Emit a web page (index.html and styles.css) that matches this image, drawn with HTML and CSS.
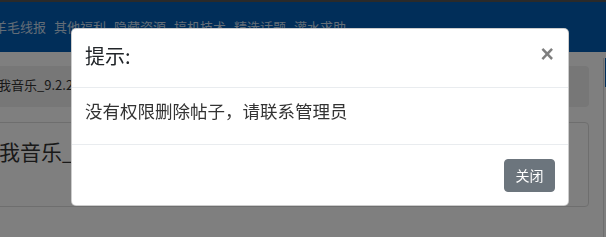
FILE: index.html
```html
<!DOCTYPE html>
<html lang="zh-CN">
<head>
  <meta charset="UTF-8">
  <meta name="viewport" content="width=device-width, initial-scale=1.0">
  <title>提示</title>
  <link rel="stylesheet" href="styles.css">
</head>
<body>
  <div class="topline"></div>
  <nav class="navbar">
    <a href="#">羊毛线报</a>
    <a href="#">其他福利</a>
    <a href="#">隐藏资源</a>
    <a href="#">搞机技术</a>
    <a href="#">精选话题</a>
    <a href="#">灌水求助</a>
  </nav>

  <div class="container">
    <div class="main">
      <div class="breadcrumb">我音乐_9.2.2</div>
      <div class="card">
        <h2 class="card-title">我音乐_9.2.2</h2>
      </div>
    </div>
    <div class="side">
      <div class="side-head"></div>
    </div>
  </div>

  <div class="backdrop"></div>
  <div class="modal">
    <div class="modal-header">
      <h5 class="modal-title">提示:</h5>
      <button class="close">×</button>
    </div>
    <div class="modal-body">没有权限删除帖子，请联系管理员</div>
    <div class="modal-footer">
      <button class="btn-secondary">关闭</button>
    </div>
  </div>
</body>
</html>
```

FILE: styles.css
```css
* { box-sizing: border-box; }
body {
  margin: 0;
  background: #fff;
  color: #333;
  font-family: "Noto Sans CJK SC", "Liberation Sans", sans-serif;
  overflow: hidden;
}

.topline {
  height: 2px;
  background: #555;
}

.navbar {
  height: 50px;
  background: #025cb2;
  display: flex;
  align-items: center;
  gap: 8px;
  margin-left: -6px;
  padding-bottom: 2px;
}
.navbar a {
  color: rgba(255, 255, 255, 0.78);
  font-size: 13px;
  text-decoration: none;
  white-space: nowrap;
}

.container {
  display: flex;
  margin-left: -15px;
  padding-top: 6px;
}
.main {
  width: 604px;
  flex-shrink: 0;
  padding-top: 8px;
}
.breadcrumb {
  height: 41px;
  line-height: 38px;
  background: #eee;
  border-radius: 4px;
  padding-left: 13px;
  font-size: 13px;
  color: #333;
  white-space: nowrap;
}
.card {
  margin-top: 15px;
  height: 85px;
  border: 1px solid #ddd;
  border-radius: 0 4px 4px 0;
  padding: 13px 13px;
}
.card-title {
  margin: 0;
  font-size: 21px;
  font-weight: normal;
  line-height: 30px;
  color: #333;
  white-space: nowrap;
}
.side {
  margin-left: 14px;
  width: 60px;
  flex-shrink: 0;
  border-left: 1px solid #ddd;
  height: 200px;
  padding-left: 1px;
}
.side-head {
  height: 29px;
  background: #025cb2;
}

.backdrop {
  position: fixed;
  inset: 0;
  background: rgba(0, 0, 0, 0.5);
}

.modal {
  position: fixed;
  top: 28px;
  left: 71px;
  width: 498px;
  background: #fff;
  border: 1px solid rgba(0, 0, 0, 0.2);
  border-radius: 5px;
}
.modal-header {
  display: flex;
  justify-content: space-between;
  align-items: flex-start;
  padding: 12px 14px 16px 13px;
  border-bottom: 1px solid #e9ecef;
}
.modal-title {
  margin: 0;
  font-size: 20px;
  font-weight: normal;
  line-height: 30px;
  color: #212529;
}
.close {
  background: none;
  border: none;
  padding: 0;
  margin-top: 1px;
  font-family: "Liberation Sans", Arial, sans-serif;
  font-size: 23px;
  font-weight: 700;
  line-height: 24px;
  color: #000;
  opacity: 0.5;
  cursor: pointer;
}
.modal-body {
  padding: 9px 13px 19px;
  font-size: 17.5px;
  line-height: 28px;
  color: #333;
}
.modal-footer {
  display: flex;
  justify-content: flex-end;
  padding: 14px 13px 13px;
  border-top: 1px solid #e9ecef;
}
.btn-secondary {
  background: #6c757d;
  border: 1px solid #6c757d;
  border-radius: 4px;
  color: #fff;
  font-family: inherit;
  font-size: 14px;
  line-height: 21px;
  padding: 5px 10.5px;
  cursor: pointer;
}
```
